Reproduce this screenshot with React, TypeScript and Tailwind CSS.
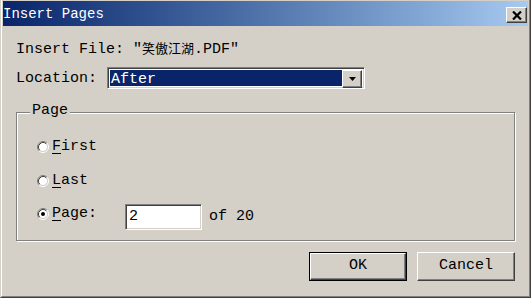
function Radio({ checked }: { checked?: boolean }) {
  return (
    <svg width="12" height="12" viewBox="0 0 12 12" className="shrink-0">
      <circle cx="6" cy="6" r="4.5" fill="#ffffff" />
      <path d="M2.11 9.89 A5.5 5.5 0 0 1 9.89 2.11" fill="none" stroke="#808080" strokeWidth="1" />
      <path d="M9.89 2.11 A5.5 5.5 0 0 1 2.11 9.89" fill="none" stroke="#ffffff" strokeWidth="1" />
      <path d="M2.82 9.18 A4.5 4.5 0 0 1 9.18 2.82" fill="none" stroke="#404040" strokeWidth="1" />
      <path d="M9.18 2.82 A4.5 4.5 0 0 1 2.82 9.18" fill="none" stroke="#d4d0c8" strokeWidth="1" />
      {checked && <circle cx="6" cy="6" r="2" fill="#000000" />}
    </svg>
  )
}

const raised =
  "border border-t-white border-l-white border-b-[#404040] border-r-[#404040] shadow-[inset_-1px_-1px_0_#808080] bg-[#d4d0c8]"
const sunken =
  "border border-t-[#808080] border-l-[#808080] border-b-white border-r-white shadow-[inset_1px_1px_0_#404040,inset_-1px_-1px_0_#d4d0c8]"

function RadioRow({ letter, rest, checked }: { letter: string; rest: string; checked?: boolean }) {
  return (
    <div className="flex items-center h-[20px]">
      <Radio checked={checked} />
      <span className="ml-[3px]">
        <span className="underline underline-offset-[3px]">{letter}</span>
        {rest}
      </span>
    </div>
  )
}

export default function App() {
  return (
    <div className="w-[531px] h-[298px] bg-[#d4d0c8] border-l border-r border-b border-l-[#d4d0c8] border-r-[#404040] border-b-[#404040] text-black font-['Liberation_Mono','Noto_Sans_CJK_SC',monospace] text-[15px]">
      <div className="h-full flex flex-col border-l border-r border-b border-l-white border-r-[#808080] border-b-[#808080] px-[1px] pt-[1px]">
        {/* title bar */}
        <div className="h-[25px] shrink-0 flex items-center justify-between bg-linear-to-r from-[#0a246a] to-[#a6caf0] pr-[1px]">
          <span className="text-white text-[14px] leading-none">Insert Pages</span>
          <div className={`w-[21px] h-[16px] mt-[3px] flex items-center justify-center ${raised}`}>
            <svg width="10" height="9" viewBox="0 0 10 9">
              <path d="M1 0.5 L9 8.5 M9 0.5 L1 8.5" stroke="#000" strokeWidth="2.2" />
            </svg>
          </div>
        </div>

        <div className="flex flex-col pl-[13px] pr-[13px]">
          <div className="h-[20px] leading-[20px] mt-[14px] whitespace-pre">
            Insert File: "<span className="text-[13px]">笑傲江湖</span>.PDF"
          </div>

          <div className="flex items-center mt-[7px] h-[22px]">
            <span className="w-[91px] mt-[3px]">Location:</span>
            <div className={`w-[258px] h-[22px] flex p-[2px] bg-white ${sunken}`}>
              <div className="flex-1 bg-[#0a246a] text-white leading-[20px] pl-[1px]">After</div>
              <div className={`w-[20px] h-[18px] flex items-center justify-center ${raised}`}>
                <svg width="7" height="4" viewBox="0 0 7 4">
                  <path d="M0 0 H7 L3.5 4 Z" fill="#000" />
                </svg>
              </div>
            </div>
          </div>

          <div className="relative mt-[23px] w-[499px] h-[129px] border border-[#808080] shadow-[inset_1px_1px_0_#fff,1px_1px_0_#fff] pl-[20px]">
            <span className="absolute -top-[12px] left-[13px] px-[2px] leading-[20px] bg-[#d4d0c8]">Page</span>
            <div className="mt-[24px]">
              <RadioRow letter="F" rest="irst" />
            </div>
            <div className="mt-[14px]">
              <RadioRow letter="L" rest="ast" />
            </div>
            <div className="mt-[13px] flex items-start">
              <div className="w-[88px]">
                <RadioRow letter="P" rest="age:" checked />
              </div>
              <div className={`w-[77px] h-[26px] bg-white pl-[3px] leading-[24px] ${sunken}`}>2</div>
              <span className="ml-[7px] leading-[26px]">of 20</span>
            </div>
          </div>

          <div className="flex justify-end gap-[10px] mt-[11px]">
            <div className="w-[98px] h-[29px] border border-black flex">
              <div className={`flex-1 flex items-center justify-center ${raised}`}>OK</div>
            </div>
            <div className={`w-[98px] h-[29px] flex items-center justify-center ${raised}`}>Cancel</div>
          </div>
        </div>
      </div>
    </div>
  )
}
